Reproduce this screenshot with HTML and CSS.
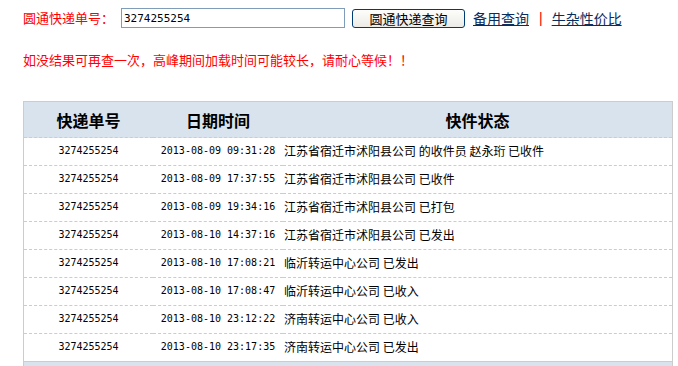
FILE: index.html
```html
<!DOCTYPE html>
<html lang="zh-CN">
<head>
  <meta charset="UTF-8" />
  <title>圆通快递查询</title>
  <link rel="stylesheet" href="styles.css">
</head>
<body>
  <div class="search">
    <label for="danhao">圆通快递单号：</label>
    <input type="text" id="danhao" value="3274255254" />
    <button id="chaxunBtn">圆通快递查询</button>
    <a href="#" class="link">备用查询</a>
    <span class="sep">|</span>
    <a href="#" class="link">牛杂性价比</a>
  </div>

  <p class="tip">如没结果可再查一次，高峰期间加载时间可能较长，请耐心等候！！</p>

  <table class="result">
    <thead>
      <tr>
        <th class="c1">快递单号</th>
        <th class="c2">日期时间</th>
        <th>快件状态</th>
      </tr>
    </thead>
    <tbody>
      <tr><td class="c1">3274255254</td><td class="c2">2013-08-09 09:31:28</td><td>江苏省宿迁市沭阳县公司 的收件员 赵永珩 已收件</td></tr>
      <tr><td class="c1">3274255254</td><td class="c2">2013-08-09 17:37:55</td><td>江苏省宿迁市沭阳县公司 已收件</td></tr>
      <tr><td class="c1">3274255254</td><td class="c2">2013-08-09 19:34:16</td><td>江苏省宿迁市沭阳县公司 已打包</td></tr>
      <tr><td class="c1">3274255254</td><td class="c2">2013-08-10 14:37:16</td><td>江苏省宿迁市沭阳县公司 已发出</td></tr>
      <tr><td class="c1">3274255254</td><td class="c2">2013-08-10 17:08:21</td><td>临沂转运中心公司 已发出</td></tr>
      <tr><td class="c1">3274255254</td><td class="c2">2013-08-10 17:08:47</td><td>临沂转运中心公司 已收入</td></tr>
      <tr><td class="c1">3274255254</td><td class="c2">2013-08-10 23:12:22</td><td>济南转运中心公司 已收入</td></tr>
      <tr><td class="c1">3274255254</td><td class="c2">2013-08-10 23:17:35</td><td>济南转运中心公司 已发出</td></tr>
    </tbody>
    <tfoot>
      <tr><td colspan="3"></td></tr>
    </tfoot>
  </table>
</body>
</html>
```

FILE: styles.css
```css
body {
  margin: 0;
  font-family: "Liberation Sans", "Noto Sans CJK SC", sans-serif;
  font-size: 12px;
  background: #fff;
}
.search {
  display: flex;
  align-items: center;
  padding: 8px 0 0 23px;
  height: 20px;
}
.search label {
  width: 98px;
  color: #f00;
  font-family: "Noto Sans CJK SC", sans-serif;
  font-size: 13px;
  line-height: 20px;
}
.search input {
  width: 224px;
  height: 20px;
  box-sizing: border-box;
  border: 1px solid #7f9db9;
  padding: 0 2px;
  font-family: "DejaVu Sans Mono", monospace;
  font-size: 11px;
  outline: none;
}
.search button {
  margin-left: 7px;
  width: 113px;
  height: 19px;
  padding: 0;
  border: 1px solid #003c74;
  border-radius: 3px;
  background: linear-gradient(#fdfdfb, #ecebe6);
  font-family: "Noto Sans CJK SC", sans-serif;
  font-size: 13px;
  line-height: 17px;
  color: #000;
  cursor: pointer;
}
.link {
  color: #0a2d5c;
  font-family: "Noto Sans CJK SC", sans-serif;
  font-size: 14px;
  line-height: 20px;
}
.search button + .link {
  margin-left: 8px;
}
.sep {
  color: #f00;
  font-size: 14px;
  margin: 0 9px 0 10px;
}
.tip {
  margin: 24px 0 0 23px;
  color: #f00;
  font-family: "Noto Sans CJK SC", sans-serif;
  font-size: 13px;
  line-height: 16px;
}
.result {
  margin: 33px 0 0 23px;
  width: 650px;
  border-collapse: collapse;
  border: 1px solid #ccc;
  border-bottom: none;
}
.result th {
  height: 35px;
  padding: 0;
  background: #d9e3ee;
  font-family: "Noto Sans CJK SC", sans-serif;
  font-size: 16px;
  font-weight: bold;
  text-align: center;
  border-bottom: 1px dashed #ccc;
}
.result td {
  height: 25px;
  padding: 0 0 2px 1px;
  font-family: "Noto Sans CJK SC", sans-serif;
  font-size: 12px;
  border-bottom: 1px dashed #ccc;
  white-space: nowrap;
}
.result td.c1, .result td.c2 {
  text-align: center;
  padding-left: 0;
  font-family: "DejaVu Sans Mono", monospace;
  font-size: 10px;
}
.c1 {
  width: 129px;
}
.c2 {
  width: 130px;
}
.result tbody tr:last-child td {
  border-bottom: 1px solid #ccc;
}
.result tfoot td {
  height: 10px;
  padding: 0;
  background: #d9e3ee;
  border: none;
}
```
